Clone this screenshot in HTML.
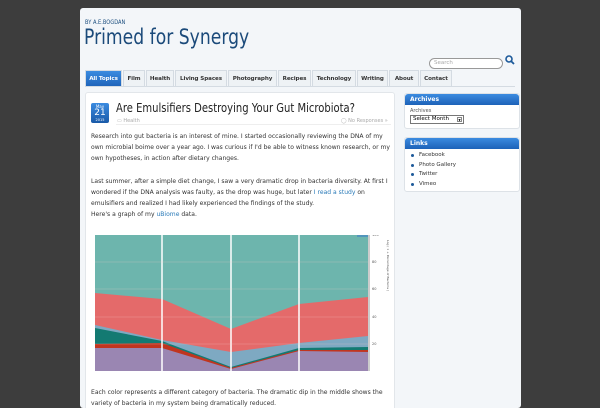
<!DOCTYPE html>
<html><head><meta charset="utf-8"><style>
*{margin:0;padding:0;box-sizing:border-box}
body{width:600px;height:400px;overflow:hidden;background:#3d3d3d;font-family:"DejaVu Sans","Liberation Sans",sans-serif;position:relative}
#page{position:absolute;left:80px;top:8px;width:441px;height:400px;background:#f3f6f9;border-radius:3px;overflow:hidden}
.a{position:absolute;white-space:nowrap}
.c{transform-origin:0 0}
.by{left:5px;top:11px;font-size:6px;color:#1d4f7f;transform:scaleX(.85)}
.title{left:4px;top:17px;font-size:21.5px;color:#1b4a7a;transform:scaleX(.8)}
.search{left:349px;top:50px;width:74px;height:11px;border:1px solid #999;border-radius:6px;background:#fff;font-size:5.5px;color:#aaa;padding:1px 4px}
.nav{left:5px;top:62px;height:17px;display:flex;gap:1px}
.nav div{height:17px;background:#eef2f5;border:1px solid #d4dbe2;border-bottom:none;font-size:5.6px;font-weight:bold;color:#333;padding:5px 0 0;text-align:center;overflow:hidden;letter-spacing:-.1px}
.nav div.on{background:linear-gradient(#3b8be0,#1d62b8);color:#fff}
.navline{left:5px;top:78px;width:430px;height:1px;background:#d4dbe2}
#content{position:absolute;left:5px;top:84px;width:310px;height:320px;background:#fff;border:1px solid #e2e6ea;border-radius:3px;overflow:hidden}
.date{left:5px;top:10px;width:18px;height:20px;background:linear-gradient(#3b8be0,#1a5aa8);border-radius:2px;color:#fff;text-align:center}
.ptitle{left:30px;top:7px;font-size:12.5px;color:#222;transform:scaleX(.8)}
.meta{font-size:5px;color:#aaa;top:25px}
.body{left:5px;font-size:6.5px;color:#333;line-height:11px;transform:scaleX(.93)}
.body a{color:#2a7ab8;text-decoration:none}
.box{position:absolute;left:324px;width:116px;background:#fff;border:1px solid #dde2e7;border-radius:3px}
.bh{height:11px;background:linear-gradient(#3b8be0,#1d62b8);color:#fff;font-size:6px;font-weight:bold;padding:2px 5px;border-radius:3px 3px 0 0}
.box li{list-style:none;font-size:5.5px;color:#333;height:9.6px;padding-left:14px;position:relative}
.box li:before{content:"";position:absolute;left:6px;top:2px;width:3px;height:3px;background:#1d5a9a;border-radius:50%}
</style></head><body>
<div id="page">
<div class="a c by">BY A.E.BOGDAN</div>
<div class="a c title">Primed for Synergy</div>
<div class="a search">Search</div>
<svg class="a" style="left:425px;top:47px" width="10" height="10"><circle cx="4" cy="4" r="3" fill="none" stroke="#1d5a9a" stroke-width="1.6"/><line x1="6.2" y1="6.2" x2="9" y2="9" stroke="#1d5a9a" stroke-width="1.8"/></svg>
<div class="a nav"><div class="on" style="width:37px">All Topics</div><div style="width:22px">Film</div><div style="width:28px">Health</div><div style="width:52px">Living Spaces</div><div style="width:49px">Photography</div><div style="width:33px">Recipes</div><div style="width:44px">Technology</div><div style="width:31px">Writing</div><div style="width:30px">About</div><div style="width:32px">Contact</div></div>
<div class="a navline"></div>
<div id="content">
<div class="a date"><div style="font-size:4px;margin-top:1px">May</div><div style="font-size:9px;line-height:9px">21</div><div style="font-size:3.5px">2015</div></div>
<div class="a c ptitle">Are Emulsifiers Destroying Your Gut Microbiota?</div>
<div class="a meta" style="left:31px">▭ Health</div>
<div class="a meta" style="left:255px">◯ No Responses »</div>
<div class="a" style="left:30px;top:31px;width:275px;height:1px;background:#eee"></div>
<div class="a c body" style="top:38px">Research into gut bacteria is an interest of mine. I started occasionally reviewing the DNA of my<br>own microbial boime over a year ago. I was curious if I'd be able to witness known research, or my<br>own hypotheses, in action after dietary changes.</div>
<div class="a c body" style="top:83px">Last summer, after a simple diet change, I saw a very dramatic drop in bacteria diversity. At first I<br>wondered if the DNA analysis was faulty, as the drop was huge, but later <a>I read a study</a> on<br>emulsifiers and realized I had likely experienced the findings of the study.</div>
<div class="a c body" style="top:116px">Here's a graph of my <a>uBiome</a> data.</div>
<svg class="a" style="left:9px;top:142px" width="300" height="140">
<rect x="0" y="0" width="273" height="136" fill="#6db5ad"/>
<polygon fill="#e46a6a" points="0,58 67,64 136,94 204,69 273,62 273,136 0,136"/>
<polygon fill="#7ea9c2" points="0,90 67,105 136,117 204,108 273,101 273,136 0,136"/>
<polygon fill="#137a72" points="0,93 67,106 136,132 204,113 273,112 273,136 0,136"/>
<polygon fill="#c0351f" points="0,109 67,108 136,133 204,115 273,115 273,136 0,136"/>
<polygon fill="#9a86b2" points="0,113 67,113 136,134 204,116 273,117 273,136 0,136"/>
<line x1="273" y1="1" x2="262" y2="1" stroke="#4a8ac0" stroke-width="1.5"/>
<g stroke="#fff" stroke-width="1.5"><line x1="67" y1="0" x2="67" y2="136"/><line x1="136" y1="0" x2="136" y2="136"/><line x1="204" y1="0" x2="204" y2="136"/></g>
<g stroke="#f0c8c8" stroke-width=".4" opacity=".6"><line x1="0" y1="27" x2="273" y2="27"/><line x1="0" y1="54" x2="273" y2="54"/><line x1="0" y1="82" x2="273" y2="82"/><line x1="0" y1="109" x2="273" y2="109"/></g>
<line x1="274" y1="-2" x2="274" y2="136" stroke="#555" stroke-width=".6"/>
<g font-size="3.5" fill="#555"><text x="277" y="1">100</text><text x="277" y="28">80</text><text x="277" y="55">60</text><text x="277" y="83">40</text><text x="277" y="110">20</text></g>
<text transform="translate(292,5) rotate(90)" font-size="3" fill="#555">Log ( 1 + Percentage of Bacteria )</text>
</svg>
<div class="a c body" style="top:294px">Each color represents a different category of bacteria. The dramatic dip in the middle shows the<br>variety of bacteria in my system being dramatically reduced.</div>
</div>
<div class="box" style="top:85px;height:36px"><div class="bh">Archives</div><div style="font-size:5px;color:#555;padding:3px 5px 1px">Archives</div><div style="margin-left:5px;width:54px;height:9px;border:1px solid #777;font-size:5.5px;padding-left:2px;position:relative">Select Month<span style="position:absolute;right:1px;top:1px;width:5px;height:5px;border:1px solid #888;font-size:3px;line-height:4px;text-align:center">▼</span></div></div>
<div class="box" style="top:129px;height:55px"><div class="bh">Links</div><ul style="padding-top:3px"><li>Facebook</li><li>Photo Gallery</li><li>Twitter</li><li>Vimeo</li></ul></div>
</div>
</body></html>
